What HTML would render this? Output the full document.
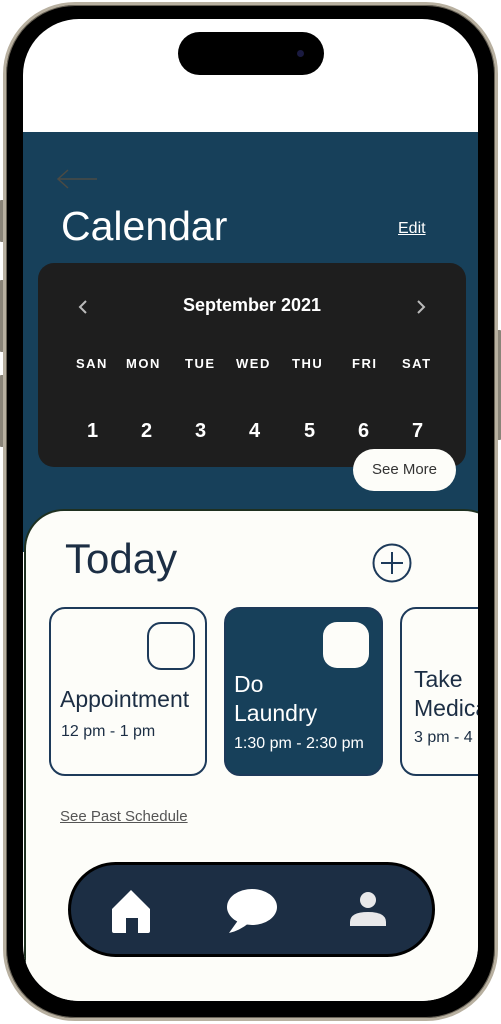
<!DOCTYPE html>
<html><head><style>
*{margin:0;padding:0;box-sizing:border-box}
body{width:501px;height:1024px;background:#fff;position:relative;overflow:hidden;font-family:"Liberation Sans",sans-serif}
.abs{position:absolute}
#frame{left:3px;top:2px;width:495px;height:1019px;border-radius:72px;background:#000;border:3px solid #b8b0a0;box-shadow:inset 0 0 0 1px #6a6458}
#screen{left:23px;top:19px;width:455px;height:982px;border-radius:56px;background:#fff;overflow:hidden}
.btn{background:#8a8478;width:4px;border-radius:1px}
</style></head><body>
<div class="abs btn" style="left:0;top:200px;height:42px"></div>
<div class="abs btn" style="left:0;top:280px;height:72px"></div>
<div class="abs btn" style="left:0;top:375px;height:72px"></div>
<div class="abs btn" style="left:497px;top:330px;height:110px"></div>
<div id="frame" class="abs"></div>
<div id="screen" class="abs">
  <div class="abs" style="left:0;top:113px;width:455px;height:420px;background:#17405a"></div>
  <svg class="abs" style="left:32px;top:148px" width="46" height="24"><path d="M42 12H3M13 3L3 12L13 21" stroke="#4a4a44" stroke-width="1.5" fill="none"/></svg>
  <div class="abs" style="left:38px;top:184px;color:#fff;font-size:41px">Calendar</div>
  <div class="abs" style="left:375px;top:201px;color:#fff;font-size:16px;text-decoration:underline">Edit</div>
  <div class="abs" style="left:15px;top:244px;width:428px;height:204px;background:#1e1e1e;border-radius:16px;color:#fff">
    <svg class="abs" style="left:40px;top:37px" width="10" height="14"><path d="M8 1L2 7L8 13" stroke="#bbb" stroke-width="2" fill="none"/></svg>
    <svg class="abs" style="left:378px;top:37px" width="10" height="14"><path d="M2 1L8 7L2 13" stroke="#bbb" stroke-width="2" fill="none"/></svg>
    <div class="abs" style="left:0;width:428px;top:32px;text-align:center;font-size:18px;font-weight:bold">September 2021</div>
    <div class="abs" style="left:0;top:93px;width:428px;font-size:13px;font-weight:bold;letter-spacing:1.5px">
      <span class="abs" style="left:38px">SAN</span><span class="abs" style="left:88px">MON</span><span class="abs" style="left:147px">TUE</span><span class="abs" style="left:198px">WED</span><span class="abs" style="left:254px">THU</span><span class="abs" style="left:314px">FRI</span><span class="abs" style="left:364px">SAT</span>
    </div>
    <div class="abs" style="left:0;top:157px;width:428px;font-size:20px;font-weight:bold">
      <span class="abs" style="left:49px">1</span><span class="abs" style="left:103px">2</span><span class="abs" style="left:157px">3</span><span class="abs" style="left:211px">4</span><span class="abs" style="left:266px">5</span><span class="abs" style="left:320px">6</span><span class="abs" style="left:374px">7</span>
    </div>
  </div>
  <div class="abs" style="left:330px;top:430px;width:103px;height:42px;background:#fdfdf9;border-radius:21px;color:#333;font-size:15px;text-align:center;line-height:42px">See More</div>
  <div class="abs" style="left:1px;top:490px;width:480px;height:520px;background:#fdfdf9;border-radius:40px 40px 0 0;border:2px solid #1e3020;border-bottom:none;border-right:none"></div>
  <div class="abs" style="left:42px;top:516px;color:#1c2e44;font-size:42px">Today</div>
  <svg class="abs" style="left:349px;top:524px" width="40" height="40"><circle cx="20" cy="20" r="18.5" stroke="#1d3a5a" stroke-width="2" fill="none"/><path d="M20 9V31M9 20H31" stroke="#1d3a5a" stroke-width="2"/></svg>
  <div class="abs" style="left:26px;top:588px;width:158px;height:169px;border:2px solid #1d3a5a;border-radius:16px;background:#fdfdf9">
    <div class="abs" style="left:96px;top:13px;width:48px;height:48px;border:2px solid #1d3a5a;border-radius:14px"></div>
    <div class="abs" style="left:9px;top:77px;font-size:23px;color:#1c2e44">Appointment</div>
    <div class="abs" style="left:10px;top:114px;font-size:16px;color:#1c2e44">12 pm - 1 pm</div>
  </div>
  <div class="abs" style="left:201px;top:588px;width:159px;height:169px;border:2px solid #1d3a5a;border-radius:16px;background:#17405a;color:#fff">
    <div class="abs" style="left:97px;top:13px;width:46px;height:46px;background:#fdfdf9;border-radius:14px"></div>
    <div class="abs" style="left:8px;top:61px;font-size:23px;line-height:29px">Do<br>Laundry</div>
    <div class="abs" style="left:8px;top:126px;font-size:16px;white-space:nowrap">1:30 pm - 2:30 pm</div>
  </div>
  <div class="abs" style="left:377px;top:588px;width:120px;height:169px;border:2px solid #1d3a5a;border-radius:16px;background:#fdfdf9;color:#1c2e44">
    <div class="abs" style="left:12px;top:56px;font-size:23px;line-height:29px">Take<br>Medication</div>
    <div class="abs" style="left:12px;top:120px;font-size:16px;white-space:nowrap">3 pm - 4 pm</div>
  </div>
  <div class="abs" style="left:37px;top:789px;font-size:15px;color:#555;text-decoration:underline">See Past Schedule</div>
  <div class="abs" style="left:45px;top:843px;width:367px;height:95px;background:#1c2e44;border:3px solid #000;border-radius:48px">
    <svg class="abs" style="left:38px;top:22px" width="46" height="48"><path d="M3 22L22 3L41 22V44Q41 46 39 46H29V31H17V46H5Q3 46 3 44Z" fill="#fff"/></svg>
    <svg class="abs" style="left:154px;top:22px" width="54" height="50"><ellipse cx="27" cy="20" rx="25" ry="18" fill="#fff"/><path d="M14 32L4 46Q14 44 24 36Z" fill="#fff"/></svg>
    <svg class="abs" style="left:278px;top:24px" width="40" height="40"><circle cx="19" cy="11" r="8" fill="#e8e8ea"/><path d="M1 37V33Q1 23 19 23Q37 23 37 33V37Z" fill="#e8e8ea"/></svg>
  </div>
</div>
<div class="abs" style="left:178px;top:32px;width:146px;height:43px;background:#000;border-radius:22px"></div>
<div class="abs" style="left:297px;top:50px;width:7px;height:7px;background:#1a1a40;border-radius:50%"></div>
</body></html>
